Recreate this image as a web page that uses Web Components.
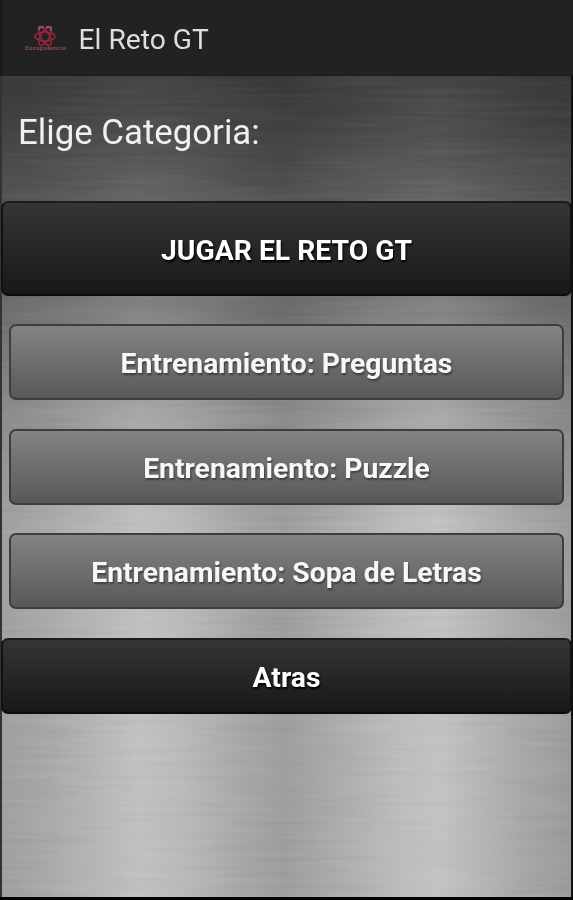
<!DOCTYPE html>
<html lang="es">
<head>
<meta charset="utf-8">
<title>El Reto GT</title>
<style>
    body {
        margin: 0;
        background: #000;
        font-family: Roboto, "Liberation Sans", sans-serif;
    }
</style>
</head>
<body>
<reto-screen>
    <app-header slot="header">El Reto GT</app-header>
    <category-title>Elige Categoria:</category-title>
    <menu-button variant="dark" size="large">JUGAR EL RETO GT</menu-button>
    <menu-button>Entrenamiento: Preguntas</menu-button>
    <menu-button>Entrenamiento: Puzzle</menu-button>
    <menu-button>Entrenamiento: Sopa de Letras</menu-button>
    <menu-button variant="dark">Atras</menu-button>
</reto-screen>

<script>
class RetoScreen extends HTMLElement {
    constructor() {
        super();
        this.attachShadow({mode: 'open'});
        this.shadowRoot.innerHTML = `
        <style>
            :host {
                display: flex;
                flex-direction: column;
                box-sizing: border-box;
                height: 900px;
                border-bottom: 3px solid #000;
                overflow: hidden;
            }
            main {
                flex: 1;
                display: flex;
                flex-direction: column;
                position: relative;
                border-left: 2px solid #333;
                border-right: 2px solid #111;
                background:
                    linear-gradient(rgba(0,0,0,0.64) 0, rgba(0,0,0,0.59) 54px, rgba(0,0,0,0.48) 120px, rgba(0,0,0,0.32) 230px, rgba(0,0,0,0.13) 338px, rgba(0,0,0,0) 450px),
                    linear-gradient(90deg, #a0a0a0 0, #a9a9a9 8%, #c1c1c1 24%, #bbb 31%, #a6a6a6 43%, #9e9e9e 49.5%, #a6a6a6 55%, #bcbcbc 69%, #c2c2c2 77%, #a9a9a9 91%, #9c9c9c 100%);
            }
            /* brushed grain over the metal */
            .grain {
                position: absolute;
                inset: 0;
                width: 100%;
                height: 100%;
                opacity: 0.08;
                mix-blend-mode: soft-light;
            }
            .content {
                position: relative;
                display: flex;
                flex-direction: column;
            }
        </style>
        <slot name="header"></slot>
        <main>
            <svg class="grain">
                <filter id="brushed" x="0" y="0" width="100%" height="100%" color-interpolation-filters="sRGB">
                    <feTurbulence type="fractalNoise" baseFrequency="0.01 0.22" numOctaves="2" seed="4"/>
                    <feColorMatrix values="1.6 0 0 0 -0.3  1.6 0 0 0 -0.3  1.6 0 0 0 -0.3  0 0 0 0 1"/>
                </filter>
                <rect width="100%" height="100%" filter="url(#brushed)"/>
            </svg>
            <div class="content"><slot></slot></div>
        </main>
        `;
    }
}

class AppHeader extends HTMLElement {
    constructor() {
        super();
        this.attachShadow({mode: 'open'});
        this.shadowRoot.innerHTML = `
        <style>
            :host {
                display: flex;
                align-items: center;
                box-sizing: border-box;
                height: 76px;
                padding: 3px 0 0 23px;
                background: #222;
                border-left: 2px solid #1a1a1a;
                border-bottom: 1px solid #1c1c1c;
                color: #dedede;
                font-size: 28.2px;
            }
            svg {
                width: 42px;
                height: 28px;
                margin-right: 11.6px;
            }
        </style>
        <svg viewBox="0 0 42 28">
            <g fill="none" stroke="#ad2942" stroke-width="1.5" opacity="0.85">
                <ellipse cx="20" cy="11.5" rx="10" ry="4.4"/>
                <ellipse cx="20" cy="11.5" rx="10" ry="4.4" transform="rotate(60 20 11.5)"/>
                <ellipse cx="20" cy="11.5" rx="10" ry="4.4" transform="rotate(120 20 11.5)"/>
            </g>
            <path d="M14 5v-3h5m2 0h5v4" fill="none" stroke="#a3616e" stroke-width="1.3"/>
            <text x="0" y="25" textLength="41" lengthAdjust="spacingAndGlyphs" font-size="5.5" font-weight="bold" fill="#8d4454">Escapalencia</text>
        </svg>
        <span><slot></slot></span>
        `;
    }
}

class CategoryTitle extends HTMLElement {
    constructor() {
        super();
        this.attachShadow({mode: 'open'});
        this.shadowRoot.innerHTML = `
        <style>
            :host {
                display: flex;
                align-items: center;
                box-sizing: border-box;
                height: 125px;
                padding: 0 16px 13px;
                color: #f0f0f0;
                font-size: 34.8px;
            }
        </style>
        <span><slot></slot></span>
        `;
    }
}

class MenuButton extends HTMLElement {
    constructor() {
        super();
        this.attachShadow({mode: 'open'});
        this.shadowRoot.innerHTML = `
        <style>
            :host {
                display: block;
                margin: 0 7px 28.5px;
            }
            :host([variant="dark"]) {
                margin: 0 -1px 28px;
            }
            button {
                display: flex;
                align-items: center;
                justify-content: center;
                box-sizing: border-box;
                width: 100%;
                height: 76px;
                padding: 3px 0 0;
                border: 2px solid #3d3d3d;
                border-radius: 7px;
                background: linear-gradient(#838383, #585858);
                color: #f7f7f7;
                font: bold 28.3px Roboto, "Liberation Sans", sans-serif;
                text-shadow: 1px 2px 2px rgba(0,0,0,0.4);
            }
            :host([variant="dark"]) button {
                border-color: #1c1c1c #111 #0c0c0c;
                background: linear-gradient(#353535, #181818);
                color: #fff;
                text-shadow: 1px 2px 2px #000;
            }
            :host([size="large"]) button {
                height: 95px;
            }
        </style>
        <button><span><slot></slot></span></button>
        `;
    }
}

window.customElements.define('reto-screen', RetoScreen);
window.customElements.define('app-header', AppHeader);
window.customElements.define('category-title', CategoryTitle);
window.customElements.define('menu-button', MenuButton);
</script>
</body>
</html>
